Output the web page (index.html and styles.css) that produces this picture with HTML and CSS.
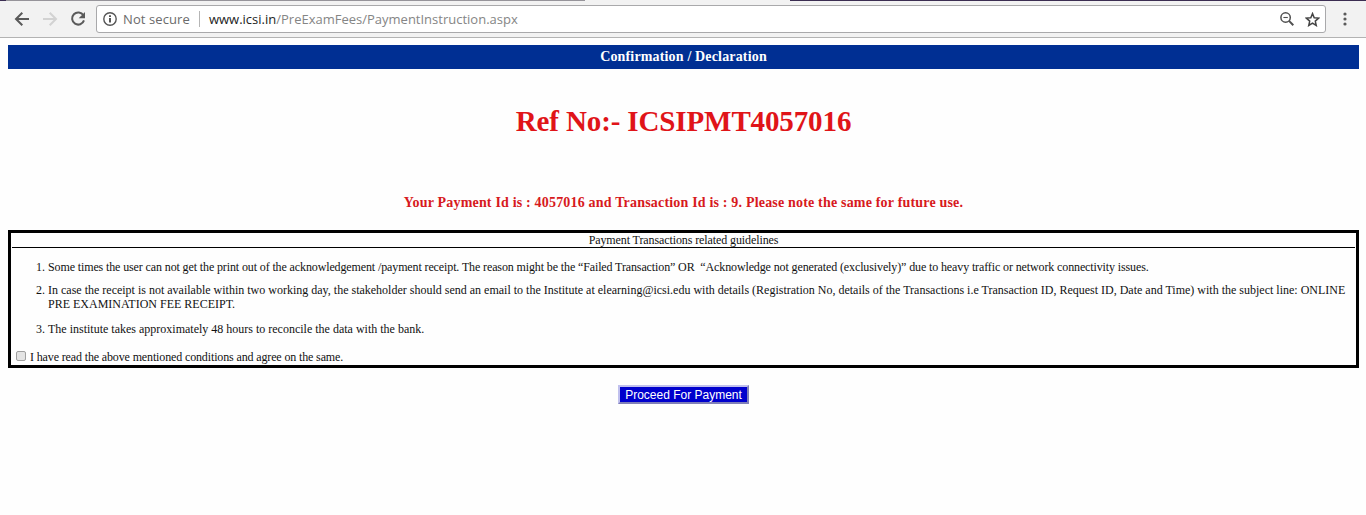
FILE: index.html
```html
<!DOCTYPE html>
<html>
    <head>
        <title>Confirmation / Declaration</title>
        <meta charset="UTF-8">
        <meta name="viewport" content="width=device-width, initial-scale=1.0">
        <link rel="stylesheet" href="styles.css">
    </head>
    <body>
        <div class="tabstrip">
            <div class="corner"></div>
            <div class="tabs"></div>
            <div class="activetab"></div>
            <div class="frame"></div>
        </div>
        <div class="toolbar">
            <svg class="nav" width="16" height="16" viewBox="0 0 16 16"><path d="M15 8H2.5M8.3 1.7L2 8l6.3 6.3" fill="none" stroke="#5a5a5a" stroke-width="2"/></svg>
            <svg class="nav" width="16" height="16" viewBox="0 0 16 16"><path d="M1 8h12.5M7.7 1.7L14 8l-6.3 6.3" fill="none" stroke="#d2d2d2" stroke-width="2"/></svg>
            <svg class="nav" width="16" height="16" viewBox="0 0 16 16"><path d="M13.4 4.3A6.1 6.1 0 1 0 14 9.4" fill="none" stroke="#5a5a5a" stroke-width="2"/><path d="M15 1v6.3H8.7z" fill="#5a5a5a"/></svg>
            <div class="address">
                <svg class="info" width="14" height="14" viewBox="0 0 14 14"><circle cx="7" cy="7" r="6.2" fill="none" stroke="#555" stroke-width="1.4"/><path d="M6.1 3.3h1.8v1.7H6.1zM6.1 6.1h1.8v4.5H6.1z" fill="#444"/></svg>
                <div class="secure">Not secure</div>
                <div class="divider"></div>
                <div class="url">www.icsi.in<b>/PreExamFees/PaymentInstruction.aspx</b></div>
                <svg class="lens" width="14" height="14" viewBox="0 0 14 14"><circle cx="5.6" cy="5.5" r="4.7" fill="none" stroke="#505050" stroke-width="1.5"/><path d="M3.4 5.5h4.4" stroke="#505050" stroke-width="1.1"/><path d="M9 8.9l4.3 4.3" stroke="#505050" stroke-width="2"/></svg>
                <svg class="star" width="15" height="15" viewBox="0 0 14 14"><path d="M7 1.5l1.6 3.8 4.2.4-3.2 2.8.9 4.1L7 10.4l-3.5 2.2.9-4.1-3.2-2.8 4.2-.4z" fill="none" stroke="#444" stroke-width="1.4"/></svg>
            </div>
            <svg class="menu" width="4" height="14" viewBox="0 0 4 14"><circle cx="2" cy="2" r="1.6" fill="#5a5a5a"/><circle cx="2" cy="7" r="1.6" fill="#5a5a5a"/><circle cx="2" cy="12" r="1.6" fill="#5a5a5a"/></svg>
        </div>

        <div class="page">
            <div class="title">Confirmation / Declaration</div>
            <h1>Ref No:- ICSIPMT4057016</h1>
            <div class="payid">Your Payment Id is : 4057016 and Transaction Id is : 9. Please note the same for future use.</div>
            <div class="guidelines">
                <div class="heading">Payment Transactions related guidelines</div>
                <ol>
                    <li><span class="first">Some times the user can not get the print out of the acknowledgement /payment receipt. The reason might be the “Failed Transaction” OR&nbsp; “Acknowledge not generated (exclusively)” due to heavy traffic or network connectivity issues.</span></li>
                    <li>In case the receipt is not available within two working day, the stakeholder should send an email to the Institute at elearning@icsi.edu with details (Registration No, details of the Transactions i.e Transaction ID, Request ID, Date and Time) with the subject line: ONLINE<br>PRE EXAMINATION FEE RECEIPT.</li>
                    <li>The institute takes approximately 48 hours to reconcile the data with the bank.</li>
                </ol>
                <label class="agree"><input type="checkbox">I have read the above mentioned conditions and agree on the same.</label>
            </div>
            <button class="proceed">Proceed For Payment</button>
        </div>
    </body>
</html>
```

FILE: styles.css
```css
body{
    margin:0;
    background:#fefefe;
    color:#111;
    font-family:"Liberation Serif", serif;
    font-size:12px;
}

.tabstrip{display:flex; height:1px;}
.corner{width:6px; background:#3b2d52;}
.tabs{width:579px; background:#96949a;}
.activetab{width:205px; background:#f2f2f2;}
.frame{flex:1; background:#3b2d52;}

.toolbar{
    display:flex;
    align-items:center;
    box-sizing:border-box;
    height:37px;
    padding:0 19px 0 14px;
    background:#f2f2f2;
    border-bottom:1px solid #b3b3b3;
}

.nav{margin-right:12px;}

.address{
    display:flex;
    align-items:center;
    flex:1;
    box-sizing:border-box;
    height:28px;
    margin:0 17px 0 -2px;
    padding:0 5px 0 6px;
    border:1px solid #a9a9ab;
    border-radius:3px;
    background:white;
    font-family:"Open Sans", sans-serif;
    font-size:13px;
    white-space:nowrap;
}

.secure{margin-left:6px; color:#6b6b6b; letter-spacing:.1px;}
.divider{width:1px; height:16px; margin:0 9px; background:#b5b5b5;}
.url{flex:1; color:#222;}
.url b{font-weight:normal; color:#858585;}
.star{margin-left:11px;}

.page{padding:7px 7px 0 8px;}

.title{
    height:24px;
    line-height:23px;
    background:#002f93;
    color:white;
    text-align:center;
    font-size:14px;
    font-weight:bold;
    letter-spacing:.16px;
}

h1{
    margin:35px 0 0;
    color:#e01418;
    text-align:center;
    font-size:29px;
    line-height:34px;
    letter-spacing:-.12px;
}

.payid{
    margin-top:57px;
    color:#d71920;
    text-align:center;
    font-size:14px;
    font-weight:bold;
    line-height:16px;
    letter-spacing:.185px;
}

.guidelines{
    box-sizing:border-box;
    height:138px;
    margin-top:19px;
    padding:0 1px;
    border:3px solid black;
    line-height:14px;
    white-space:nowrap;
}

.heading{border-bottom:1px solid black; text-align:center; letter-spacing:-.1px;}

ol{margin:12px 0 0; padding-left:36px;}
li{margin-bottom:9px;}
li + li + li{margin-top:11px;}
.first{letter-spacing:-.12px;}

.agree{display:flex; align-items:center; margin-top:14px; letter-spacing:-.135px;}
.agree input{
    appearance:none;
    width:10px;
    height:10px;
    margin:0 4px 3px;
    border:1px solid #a0a0a0;
    border-radius:2px;
    background:#e4e4e4;
}

.proceed{
    display:block;
    width:131px;
    height:19px;
    margin:17px auto 0;
    padding:0;
    border:2px solid;
    border-color:#c0c0ee #8080b8 #8080b8 #c0c0ee;
    background:#0000cd;
    color:white;
    font-family:"Liberation Sans", sans-serif;
    font-size:12px;
    line-height:14px;
}
```
